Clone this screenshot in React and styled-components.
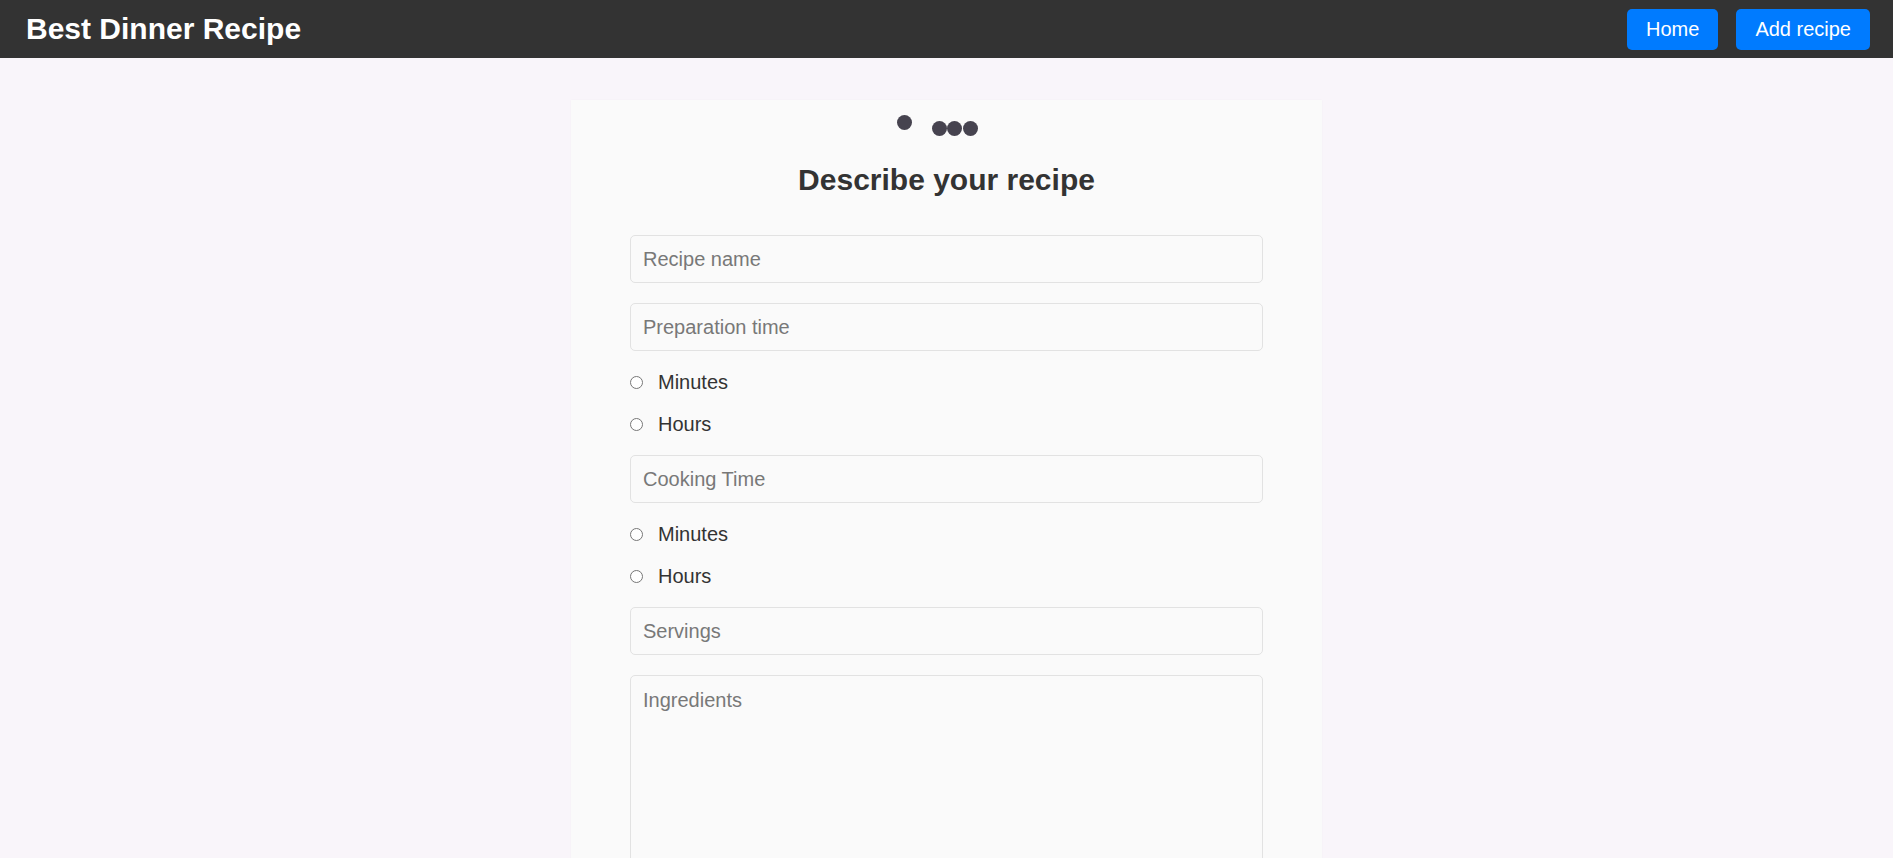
import React from 'react';
import styled, { createGlobalStyle } from 'styled-components';

const Colors = {
  page: '#f9f5fa',
  header: '#333333',
  card: '#fafafa',
  primary: '#007bff',
  text: '#333333',
  border: '#e2e2e2',
  placeholder: '#787878',
  dot: '#46434f',
};

const GlobalStyle = createGlobalStyle`
  html, body {
    margin: 0;
    padding: 0;
    background: ${Colors.page};
    font-family: "Liberation Sans", Arial, sans-serif;
  }
  * {
    box-sizing: border-box;
  }
`;

const Header = styled.header`
  height: 58px;
  background: ${Colors.header};
  display: flex;
  align-items: center;
  justify-content: space-between;
  padding: 0 23px 0 26px;
`;

const Brand = styled.h1`
  margin: 0;
  color: #ffffff;
  font-size: 30px;
  font-weight: bold;
`;

const Nav = styled.nav`
  display: flex;
  gap: 18px;
`;

const NavButton = styled.button`
  height: 41px;
  padding: 0 19px;
  border: none;
  border-radius: 5px;
  background: ${Colors.primary};
  color: #ffffff;
  font-family: inherit;
  font-size: 20px;
  cursor: pointer;
`;

const Card = styled.main`
  width: 751px;
  margin: 42px auto 0;
  padding: 15px 59px 40px;
  background: ${Colors.card};
  box-shadow: 0 0 2px rgba(0, 0, 0, 0.03);
`;

const Loader = styled.div`
  height: 22px;
  display: flex;
  justify-content: center;
  align-items: flex-start;
  padding-right: 19px;
`;

const Dot = styled.span`
  width: 15px;
  height: 15px;
  border-radius: 50%;
  background: ${Colors.dot};
  margin-top: ${({ low }) => (low ? 6 : 0)}px;
  margin-left: ${({ offset }) => offset}px;
`;

const Title = styled.h2`
  margin: 26px 0 28px;
  text-align: center;
  color: ${Colors.text};
  font-size: 30px;
  font-weight: bold;
`;

const Form = styled.form`
  display: flex;
  flex-direction: column;
`;

const Field = styled.input`
  height: 48px;
  margin: 10px 0;
  padding: 0 12px;
  border: 1px solid ${Colors.border};
  border-radius: 5px;
  background: ${Colors.card};
  font-family: inherit;
  font-size: 20px;
  color: ${Colors.text};
  outline: none;

  &::placeholder {
    color: ${Colors.placeholder};
  }
`;

const TextArea = styled.textarea`
  height: 260px;
  margin: 10px 0;
  padding: 13px 12px;
  border: 1px solid ${Colors.border};
  border-radius: 5px;
  background: ${Colors.card};
  font-family: inherit;
  font-size: 20px;
  color: ${Colors.text};
  resize: none;
  outline: none;

  &::placeholder {
    color: ${Colors.placeholder};
  }
`;

const RadioRow = styled.label`
  height: 42px;
  display: flex;
  align-items: center;
  gap: 15px;
  font-size: 20px;
  color: ${Colors.text};
`;

const Radio = styled.input`
  width: 13px;
  height: 13px;
  margin: 1px 0 0;
`;

const UnitChoice = ({ name }) => (
  <>
    {['Minutes', 'Hours'].map(unit => (
      <RadioRow key={unit}>
        <Radio type="radio" name={name} value={unit} />
        {unit}
      </RadioRow>
    ))}
  </>
);

const App = () => {
  return (
    <>
      <GlobalStyle />
      <Header>
        <Brand>Best Dinner Recipe</Brand>
        <Nav>
          <NavButton>Home</NavButton>
          <NavButton>Add recipe</NavButton>
        </Nav>
      </Header>
      <Card>
        <Loader>
          <Dot />
          <Dot low offset={20} />
          <Dot low offset={0} />
          <Dot low offset={1} />
        </Loader>
        <Title>Describe your recipe</Title>
        <Form>
          <Field placeholder="Recipe name" />
          <Field placeholder="Preparation time" />
          <UnitChoice name="prepUnit" />
          <Field placeholder="Cooking Time" />
          <UnitChoice name="cookUnit" />
          <Field placeholder="Servings" />
          <TextArea placeholder="Ingredients" />
        </Form>
      </Card>
    </>
  );
};

export default App;
